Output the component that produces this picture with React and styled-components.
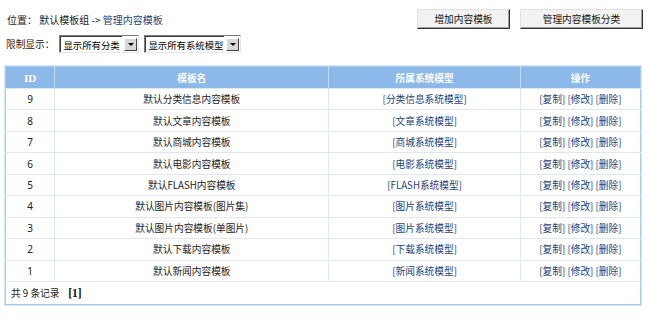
import React from "react";
import styled, { createGlobalStyle } from "styled-components";

const Global = createGlobalStyle`
  html, body { margin: 0; padding: 0; background: #fff; }
  body { font-family: "Noto Sans CJK SC", "Noto Sans", sans-serif; font-size: 9.7px; color: #222; }
`;

const Page = styled.div`
  width: 650px;
  height: 323px;
  padding: 0 0 0 5px;
  box-sizing: border-box;
`;

const TopBar = styled.div`
  display: flex;
  align-items: center;
  justify-content: space-between;
  height: 20px;
  padding: 9px 7px 0 2px;
`;

const Crumb = styled.div`
  color: #222;
  white-space: pre;
  font-size: 10px;
`;

const Link = styled.a`
  color: #1d3f7c;
  text-decoration: none;
`;

const ButtonGroup = styled.div`
  display: flex;
  gap: 10px;
`;

const Button = styled.button`
  font: inherit;
  color: #111;
  width: ${(p) => p.$w}px;
  height: 20px;
  padding: 0;
  background: #f2f2f2;
  border: 1px solid;
  border-color: #e0e0e0 #303030 #303030 #e0e0e0;
  box-shadow: inset -1px -1px 0 #a0a0a0;
`;

const FilterRow = styled.div`
  display: flex;
  align-items: center;
  gap: 5px;
  height: 18px;
  margin-top: 6px;
  padding-left: 1px;
`;

const Select = styled.div`
  display: flex;
  align-items: stretch;
  width: ${(p) => p.$w}px;
  height: 18px;
  box-sizing: border-box;
  border: 1px solid;
  border-color: #7a7a7a #e8e8e8 #e8e8e8 #7a7a7a;
  background: #fff;
  font-size: 9.4px;
`;

const SelectText = styled.span`
  flex: 1;
  display: flex;
  align-items: center;
  padding-left: 2px;
  border: 1px solid;
  border-right: none;
  border-bottom: none;
  border-color: #404040;
  color: #000;
  white-space: nowrap;
  overflow: hidden;
`;

const Arrow = styled.span`
  width: 11px;
  display: flex;
  align-items: center;
  justify-content: center;
  background: #d8d8d8;
  border: 1px solid;
  border-color: #fff #404040 #404040 #fff;
  margin: 2px 1px 1px 2px;
`;

const Tri = styled.span`
  width: 0;
  height: 0;
  border-left: 3px solid transparent;
  border-right: 3px solid transparent;
  border-top: 3px solid #000;
`;

const Table = styled.table`
  margin-top: 13px;
  width: 636px;
  border-collapse: collapse;
  border: 1px solid #a9cbea;
  box-shadow: 0 0 0 1px #d6e6f5;
  table-layout: fixed;
`;

const HeadCell = styled.th`
  height: 21px;
  padding: 0;
  background: #8db8ea;
  color: #fff;
  font-weight: bold;
  border-left: 1px solid #c6dcf3;
  text-align: center;
  font-family: ${(p) => (p.$serif ? '"Liberation Serif", serif' : 'inherit')};
  font-size: ${(p) => (p.$serif ? "11px" : "9.7px")};
  &:first-child { border-left: none; }
`;

const Row = styled.tr`
  height: 21.44px;
`;

const Cell = styled.td`
  padding: 0;
  text-align: center;
  border-top: 1px solid #dfe7f0;
  border-left: 1px solid #dfe7f0;
  color: #222;
  white-space: nowrap;
  &:first-child { border-left: none; font-family: "Noto Sans", sans-serif; font-size: 10px; }
`;

const FootCell = styled.td`
  height: 22px;
  padding: 0 0 0 5px;
  border-top: 1px solid #dfe7f0;
  white-space: pre;
`;

const Bold = styled.b`
  font-family: "Liberation Serif", serif;
  font-size: 11.5px;
  color: #111;
`;

const rows = [
  ["9", "默认分类信息内容模板", "分类信息系统模型"],
  ["8", "默认文章内容模板", "文章系统模型"],
  ["7", "默认商城内容模板", "商城系统模型"],
  ["6", "默认电影内容模板", "电影系统模型"],
  ["5", "默认FLASH内容模板", "FLASH系统模型"],
  ["4", "默认图片内容模板(图片集)", "图片系统模型"],
  ["3", "默认图片内容模板(单图片)", "图片系统模型"],
  ["2", "默认下载内容模板", "下载系统模型"],
  ["1", "默认新闻内容模板", "新闻系统模型"],
];

export default function App() {
  return (
    <Page>
      <Global />
      <TopBar>
        <Crumb>
          位置： 默认模板组 -&gt; <Link href="#">管理内容模板</Link>
        </Crumb>
        <ButtonGroup>
          <Button $w={93}>增加内容模板</Button>
          <Button $w={123}>管理内容模板分类</Button>
        </ButtonGroup>
      </TopBar>
      <FilterRow>
        <span>限制显示：</span>
        <Select $w={80}>
          <SelectText>显示所有分类</SelectText>
          <Arrow><Tri /></Arrow>
        </Select>
        <Select $w={97}>
          <SelectText>显示所有系统模型</SelectText>
          <Arrow><Tri /></Arrow>
        </Select>
      </FilterRow>
      <Table>
        <colgroup>
          <col style={{ width: 49 }} />
          <col style={{ width: 274 }} />
          <col style={{ width: 191 }} />
          <col style={{ width: 120 }} />
        </colgroup>
        <thead>
          <tr>
            <HeadCell $serif>ID</HeadCell>
            <HeadCell>模板名</HeadCell>
            <HeadCell>所属系统模型</HeadCell>
            <HeadCell>操作</HeadCell>
          </tr>
        </thead>
        <tbody>
          {rows.map(([id, name, model]) => (
            <Row key={id}>
              <Cell>{id}</Cell>
              <Cell>{name}</Cell>
              <Cell>
                <Link href="#">[{model}]</Link>
              </Cell>
              <Cell>
                <Link href="#">[复制]</Link> <Link href="#">[修改]</Link>{" "}
                <Link href="#">[删除]</Link>
              </Cell>
            </Row>
          ))}
          <tr>
            <FootCell colSpan={4}>
              共 9 条记录    <Bold>[1]</Bold>
            </FootCell>
          </tr>
        </tbody>
      </Table>
    </Page>
  );
}
